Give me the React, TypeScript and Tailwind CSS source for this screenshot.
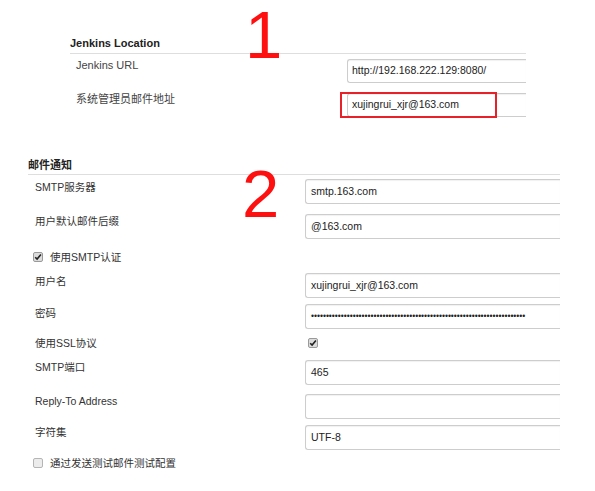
import React from "react";

const font = { fontFamily: '"Liberation Sans", Arial, "Noto Sans CJK SC", sans-serif' };

function Check({ checked }: { checked: boolean }) {
  return (
    <div
      className={
        "w-[10px] h-[10px] rounded-[2px] border flex items-center justify-center shrink-0 " +
        (checked ? "border-[#9a9a9a] bg-[#dcdcdc]" : "border-[#b5b5b5] bg-[#ececec]")
      }
    >
      {checked && (
        <svg width="8" height="8" viewBox="0 0 8 8">
          <path d="M1.2 4.2 L3.1 6.1 L6.9 1.6" fill="none" stroke="#222" strokeWidth="1.6" />
        </svg>
      )}
    </div>
  );
}

function TopRow({ label, value, mt }: { label: string; value: string; mt: string }) {
  return (
    <div className={"flex items-start " + mt}>
      <div className="w-[277px] pl-[6px] text-[11px] leading-[14px] text-[#444] -mt-[1px]">{label}</div>
      <div className="flex-1 h-[24px] border border-r-0 border-[#cdcdcd] rounded-l-[3px] flex items-center pl-[4px] text-[10.5px] text-[#222] shadow-[inset_0_1px_1px_rgba(0,0,0,0.06)]">
        {value}
      </div>
    </div>
  );
}

function Row({
  label,
  value,
  mt,
  lpt = "pt-0",
  children,
}: {
  label: string;
  value?: string;
  mt: string;
  lpt?: string;
  children?: React.ReactNode;
}) {
  return (
    <div className={"flex items-start " + mt}>
      <div className={"w-[277px] pl-[7px] text-[10.5px] leading-[14px] text-[#333] " + lpt}>{label}</div>
      {children ?? (
        <div className="flex-1 h-[25px] border border-r-0 border-[#cdcdcd] rounded-l-[3px] flex items-center pl-[5px] text-[10.5px] text-[#222] shadow-[inset_0_1px_1px_rgba(0,0,0,0.06)]">
          {value}
        </div>
      )}
    </div>
  );
}

export default function App() {
  const dots = "•".repeat(72);
  return (
    <div className="relative w-[595px] h-[491px] bg-white overflow-hidden" style={font}>
      {/* Section 1 */}
      <div className="ml-[70px] w-[456px]">
        <div className="mt-[36px] pb-[3px] border-b border-[#dedede]">
          <div className="text-[11px] leading-[14px] font-bold text-[#222]">Jenkins Location</div>
        </div>
        <TopRow label="Jenkins URL" value="http://192.168.222.129:8080/" mt="mt-[5px]" />
        <TopRow label="系统管理员邮件地址" value="xujingrui_xjr@163.com" mt="mt-[10px]" />
      </div>

      {/* Section 2 */}
      <div className="ml-[28px] w-[532px]">
        <div className="mt-[41px] pb-[2px] border-b border-[#dedede]">
          <div className="text-[11px] leading-[14px] font-bold text-[#222]">邮件通知</div>
        </div>
        <Row label="SMTP服务器" value="smtp.163.com" mt="mt-[4px]" lpt="pt-[1px]" />
        <Row label="用户默认邮件后缀" value="@163.com" mt="mt-[10px]" />
        <div className="mt-[11px] flex items-center h-[14px] pl-[5px] gap-[7px]">
          <Check checked />
          <span className="text-[10.5px] leading-[14px] text-[#333]">使用SMTP认证</span>
        </div>
        <Row label="用户名" value="xujingrui_xjr@163.com" mt="mt-[9px]" lpt="pt-[1px]" />
        <Row label="密码" mt="mt-[6px]" lpt="pt-[2px]">
          <div className="flex-1 h-[25px] border border-r-0 border-[#cdcdcd] rounded-l-[3px] flex items-center pl-[5px] text-[8.5px] text-[#222] shadow-[inset_0_1px_1px_rgba(0,0,0,0.06)] overflow-hidden whitespace-nowrap">
            {dots}
          </div>
        </Row>
        <Row label="使用SSL协议" mt="mt-[7px]">
          <div className="pl-[3px] pt-[2px]">
            <Check checked />
          </div>
        </Row>
        <Row label="SMTP端口" value="465" mt="mt-[10px]" />
        <Row label="Reply-To Address" value="" mt="mt-[9px]" />
        <Row label="字符集" value="UTF-8" mt="mt-[6px]" />
        <div className="mt-[6px] flex items-center h-[14px] pl-[5px] gap-[7px]">
          <Check checked={false} />
          <span className="text-[10.5px] leading-[14px] text-[#333]">通过发送测试邮件测试配置</span>
        </div>
      </div>

      {/* Annotations */}
      <div className="absolute left-[340px] top-[92px] w-[157px] h-[26px] border-2 border-[#e8202a]" />
      <div className="absolute left-[245px] top-[1px] text-[67px] leading-none text-[#ff1010]">1</div>
      <div className="absolute left-[242px] top-[160px] text-[67px] leading-none text-[#ff1010]">2</div>
    </div>
  );
}
